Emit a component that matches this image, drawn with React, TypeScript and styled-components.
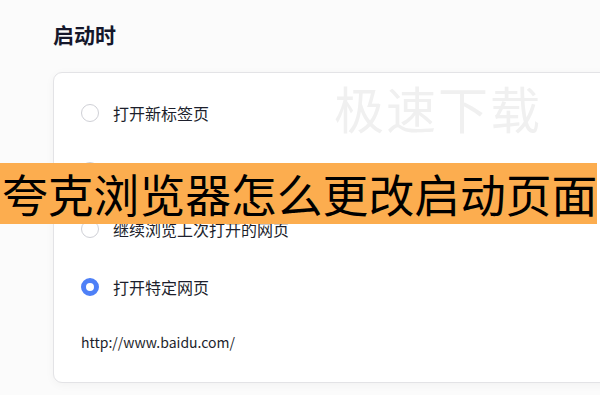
import styled, { createGlobalStyle } from 'styled-components';

const GlobalStyle = createGlobalStyle`
  html, body {
    margin: 0;
    padding: 0;
    background: #fbfbfb;
    font-family: "Noto Sans CJK SC", "Noto Sans", sans-serif;
  }
`;

const StyledPage = styled.div`
  position: relative;
  width: 600px;
  height: 395px;
  overflow: hidden;
  padding: 20px 0 0 53px;
  box-sizing: border-box;
`;

const StyledTitle = styled.div`
  font-size: 21px;
  font-weight: 700;
  line-height: 29px;
  color: #15172b;
`;

const StyledCard = styled.div`
  margin-top: 23px;
  width: 620px;
  height: 311px;
  box-sizing: border-box;
  padding: 11px 0 0 27px;
  background-color: #ffffff;
  border: 1px solid #e3e3e6;
  border-radius: 9px;
  box-shadow: 0 2px 10px rgba(0, 0, 0, 0.04);
`;

const StyledOption = styled.div`
  display: flex;
  align-items: center;
  height: 58px;
`;

const StyledRadio = styled.span<{ $checked?: boolean }>`
  width: 18px;
  height: 18px;
  box-sizing: border-box;
  border-radius: 50%;
  border: ${({ $checked }) => ($checked ? '5px solid #4e80f7' : '1.5px solid #cfd0d6')};
  background-color: #ffffff;
`;

const StyledLabel = styled.span`
  margin-left: 14px;
  font-size: 16px;
  line-height: 20px;
  color: #1d1f2c;
`;

const StyledUrl = styled.div`
  margin-top: 17px;
  font-size: 14px;
  line-height: 18px;
  color: #1d1f2c;
`;

const StyledWatermark = styled.div`
  position: absolute;
  left: 334px;
  top: 74px;
  font-size: 50px;
  line-height: 66px;
  color: #f0f0f0;
  letter-spacing: 2px;
  pointer-events: none;
`;

const StyledBanner = styled.div`
  position: absolute;
  left: 0;
  top: 163px;
  width: 597px;
  height: 61px;
  display: flex;
  align-items: center;
  padding-left: 2px;
  box-sizing: border-box;
  background-color: #fcad4f;
  font-size: 45.8px;
  line-height: 61px;
  color: #000000;
  white-space: nowrap;
  overflow: hidden;
`;

const options = [
  { label: '打开新标签页', checked: false },
  { label: '打开夸克网盘', checked: false },
  { label: '继续浏览上次打开的网页', checked: false },
  { label: '打开特定网页', checked: true },
];

const App = () => (
  <>
    <GlobalStyle />
    <StyledPage>
      <StyledTitle>启动时</StyledTitle>
      <StyledCard>
        {options.map((o) => (
          <StyledOption key={o.label}>
            <StyledRadio $checked={o.checked} />
            <StyledLabel>{o.label}</StyledLabel>
          </StyledOption>
        ))}
        <StyledUrl>http://www.baidu.com/</StyledUrl>
      </StyledCard>
      <StyledWatermark>极速下载</StyledWatermark>
      <StyledBanner>夸克浏览器怎么更改启动页面</StyledBanner>
    </StyledPage>
  </>
);

export default App;
